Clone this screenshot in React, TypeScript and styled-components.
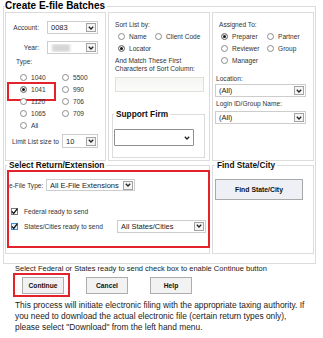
import React from "react";
import styled, { createGlobalStyle } from "styled-components";

const Global = createGlobalStyle`
  html, body { margin: 0; padding: 0; background: #fff; }
  body { font-family: "Liberation Sans", Arial, sans-serif; color: #222; }
  * { box-sizing: border-box; }
`;

const Page = styled.div`
  width: 323px;
  height: 338px;
  overflow: hidden;
  padding-left: 3px;
`;

const Frame = styled.fieldset`
  width: 313px;
  margin: 0;
  padding: 0 1px 9px 1px;
  border: 1px solid #dcdcdc;
  min-width: 0;
`;

const Title = styled.legend`
  padding: 0 2px 0 0;
  margin: 0;
  font-size: 10px;
  font-weight: bold;
  line-height: 12px;
  color: #000;
`;

const TopRow = styled.div`
  display: grid;
  grid-template-columns: 101px 102px 102px;
  column-gap: 2px;
  height: 149px;
`;

const Panel = styled.div<{ $pt?: number }>`
  border: 1px solid #dcdcdc;
  padding-top: ${(p) => p.$pt ?? 8}px;
  display: flex;
  flex-direction: column;
  align-items: flex-start;
`;

const Text = styled.div<{ $ml?: number; $mt?: number }>`
  font-size: 6.6px;
  line-height: 8px;
  height: 8px;
  white-space: nowrap;
  margin-left: ${(p) => p.$ml ?? 0}px;
  margin-top: ${(p) => p.$mt ?? 0}px;
  color: #333;
`;

const FieldGrid = styled.div`
  display: grid;
  grid-template-columns: 33px 51px;
  column-gap: 8px;
  row-gap: 7px;
  align-items: center;
`;

const FieldLabel = styled.span`
  font-size: 6.6px;
  text-align: right;
  color: #333;
`;

const SelectBox = styled.div<{ $w: number; $h?: number; $ml?: number; $mt?: number }>`
  width: ${(p) => p.$w}px;
  height: ${(p) => p.$h ?? 13}px;
  margin-left: ${(p) => p.$ml ?? 0}px;
  margin-top: ${(p) => p.$mt ?? 0}px;
  border: 1px solid #cdcdcd;
  background: #fff;
  display: flex;
  align-items: center;
  padding-left: 3px;
  font-size: 7.5px;
  color: #222;
  overflow: hidden;
  white-space: nowrap;
  flex-shrink: 0;
`;

const SelectValue = styled.span`
  flex: 1;
  overflow: hidden;
`;

const DropButton = styled.span`
  width: 10px;
  height: 9px;
  margin-right: 1px;
  border: 1px solid #a3a3a3;
  background: #f4f4f4;
  display: flex;
  align-items: center;
  justify-content: center;
  flex-shrink: 0;
`;

const Blurred = styled.span`
  display: block;
  width: 18px;
  height: 8px;
  margin-left: 1px;
  background: #d6d6d6;
  filter: blur(1.4px);
`;

const Chevron = () => (
  <svg width="6" height="4" viewBox="0 0 6 4">
    <path d="M0.8 0.8 L3 3 L5.2 0.8" fill="none" stroke="#222" strokeWidth="1.3" />
  </svg>
);

const Select = ({
  w,
  h,
  ml,
  mt,
  value,
  children,
}: {
  w: number;
  h?: number;
  ml?: number;
  mt?: number;
  value?: string;
  children?: React.ReactNode;
}) => (
  <SelectBox $w={w} $h={h} $ml={ml} $mt={mt}>
    <SelectValue>{children ?? value}</SelectValue>
    <DropButton>
      <Chevron />
    </DropButton>
  </SelectBox>
);

const RadioGrid = styled.div<{ $cols: string; $ml: number; $mt?: number }>`
  display: grid;
  grid-template-columns: ${(p) => p.$cols};
  grid-auto-rows: 12px;
  margin-left: ${(p) => p.$ml}px;
  margin-top: ${(p) => p.$mt ?? 0}px;
`;

const RadioItem = styled.label<{ $mark?: boolean }>`
  display: flex;
  align-items: center;
  gap: 4px;
  font-size: 6.6px;
  color: #333;
  white-space: nowrap;
  position: relative;
  ${(p) =>
    p.$mark
      ? `&::after {
    content: "";
    position: absolute;
    left: -13px;
    top: -1px;
    width: 45px;
    height: 15px;
    border: 2px solid #e3222b;
  }`
      : ""}
`;

const RadioInput = styled.input.attrs({ type: "radio" })`
  appearance: none;
  width: 7px;
  height: 7px;
  margin: 0;
  border: 1px solid #8c8c8c;
  border-radius: 50%;
  background: #fff;
  flex-shrink: 0;
  &:checked {
    background: #111;
    box-shadow: inset 0 0 0 1px #fff;
  }
`;

const Radio = ({ label, checked, name, mark }: { label: string; checked?: boolean; name: string; mark?: boolean }) => (
  <RadioItem $mark={mark}>
    <RadioInput name={name} defaultChecked={checked} />
    {label}
  </RadioItem>
);

const LimitRow = styled.div`
  display: flex;
  align-items: center;
  margin-top: 3px;
  margin-left: 6px;
`;

const LimitLabel = styled.span`
  width: 50px;
  font-size: 6.6px;
  color: #333;
  white-space: nowrap;
`;

const TextInput = styled.div`
  width: 89px;
  height: 15px;
  margin-left: 6px;
  margin-top: 4px;
  border: 1px solid #e2e0da;
  background: linear-gradient(#f6f6f4, #fbfbfa);
`;

const SubSet = styled.fieldset<{ $ml: number; $mt: number; $w: number }>`
  margin: ${(p) => p.$mt}px 0 0 ${(p) => p.$ml}px;
  width: ${(p) => p.$w}px;
  padding: 0 0 0 1px;
  border: 1px solid #dcdcdc;
  min-width: 0;
`;

const SubLegend = styled.legend`
  padding: 0 2px;
  margin: 0;
  font-size: 8.3px;
  font-weight: bold;
  line-height: 9px;
  color: #111;
`;

const PlainSelect = styled.div`
  width: 80px;
  height: 17px;
  margin: 10px 0 11px 0;
  border: 1px solid #8e8e8e;
  border-radius: 1px;
  background: #fff;
  display: flex;
  align-items: center;
  justify-content: flex-end;
  padding-right: 3px;
`;

const BottomRow = styled.div`
  display: grid;
  grid-template-columns: 205px 102px;
  column-gap: 2px;
  height: 93px;
`;

const GroupSet = styled.fieldset<{ $pl: number }>`
  margin: 0;
  padding: 0 0 5px ${(p) => p.$pl}px;
  border: 1px solid #dcdcdc;
  min-width: 0;
`;

const HighlightBox = styled.div`
  margin-right: -1px;
  height: 78px;
  border: 2px solid #e3222b;
  padding: 7px 2px 0 0;
`;

const TypeRow = styled.div`
  display: flex;
  align-items: center;
  height: 12px;
`;

const TypeLabel = styled.span`
  width: 37px;
  font-size: 6.6px;
  color: #333;
  white-space: nowrap;
`;

const CheckRow = styled.div<{ $mt: number; $h: number }>`
  display: flex;
  align-items: center;
  justify-content: space-between;
  height: ${(p) => p.$h}px;
  margin-top: ${(p) => p.$mt}px;
`;

const CheckLabel = styled.label`
  display: flex;
  align-items: center;
  gap: 6px;
  margin-left: 2px;
  font-size: 6.6px;
  color: #333;
  white-space: nowrap;
`;

const CheckBox = styled.span<{ $focus?: boolean }>`
  width: 7px;
  height: 7px;
  border: 1px solid ${(p) => (p.$focus ? "#3f8fd8" : "#7b7b7b")};
  background: ${(p) => (p.$focus ? "#e3effa" : "#fff")};
  display: flex;
  align-items: center;
  justify-content: center;
  overflow: visible;
`;

const Check = ({ label, focus }: { label: string; focus?: boolean }) => (
  <CheckLabel>
    <CheckBox $focus={focus} role="checkbox" aria-checked="true">
      <svg width="7" height="7" viewBox="0 0 7 7" style={{ overflow: "visible" }}>
        <path d="M0.8 3.4 L2.7 5.4 L6.4 0.6" fill="none" stroke="#111" strokeWidth="1.3" />
      </svg>
    </CheckBox>
    {label}
  </CheckLabel>
);

const FindButton = styled.button`
  width: 88px;
  height: 21px;
  margin-top: 9px;
  border: 1px solid #a9a9a9;
  background: #eef0f6;
  font-family: inherit;
  font-size: 6.85px;
  font-weight: bold;
  color: #111;
  padding: 0;
`;

const Instruction = styled.div`
  margin-left: 12px;
  font-size: 7.5px;
  line-height: 9px;
  color: #222;
  white-space: nowrap;
`;

const ButtonRow = styled.div`
  display: flex;
  align-items: center;
  margin-left: 10px;
`;

const Mark = styled.div`
  border: 2px solid #e3222b;
  padding: 2px 4px 1px 7px;
`;

const ActionButton = styled.button<{ $ml?: number }>`
  width: 42px;
  height: 17px;
  margin-left: ${(p) => p.$ml ?? 0}px;
  border: 1px solid #adadad;
  background: #f2f2f2;
  font-family: inherit;
  font-size: 6.7px;
  font-weight: bold;
  color: #111;
  padding: 0;
  display: block;
`;

const Paragraph = styled.p`
  margin: 3px 0 0 12px;
  font-size: 8.4px;
  line-height: 11px;
  color: #222;
  white-space: nowrap;
`;

export default function App() {
  return (
    <Page>
      <Global />
      <Frame>
        <Title>Create E-file Batches</Title>
        <TopRow>
          <Panel>
            <FieldGrid>
              <FieldLabel>Account:</FieldLabel>
              <Select w={51} value="0083" />
              <FieldLabel>Year:</FieldLabel>
              <Select w={51}>
                <Blurred />
              </Select>
            </FieldGrid>
            <Text $ml={10} $mt={4}>Type:</Text>
            <RadioGrid $cols="42px 42px" $ml={14} $mt={5}>
              <Radio name="type" label="1040" />
              <Radio name="type" label="5500" />
              <Radio name="type" label="1041" checked mark />
              <Radio name="type" label="990" />
              <Radio name="type" label="1120" />
              <Radio name="type" label="706" />
              <Radio name="type" label="1065" />
              <Radio name="type" label="709" />
              <Radio name="type" label="All" />
            </RadioGrid>
            <LimitRow>
              <LimitLabel>Limit List size to</LimitLabel>
              <Select w={36} h={14} value="10" />
            </LimitRow>
          </Panel>
          <Panel>
            <Text $ml={6}>Sort List by:</Text>
            <RadioGrid $cols="37px auto" $ml={9} $mt={1}>
              <Radio name="sort" label="Name" />
              <Radio name="sort" label="Client Code" />
              <Radio name="sort" label="Locator" checked />
            </RadioGrid>
            <Text $ml={6} $mt={3}>And Match These First</Text>
            <Text $ml={6}>Characters of Sort Column:</Text>
            <TextInput />
            <SubSet $ml={3} $mt={18} $w={93}>
              <SubLegend>Support Firm</SubLegend>
              <PlainSelect>
                <Chevron />
              </PlainSelect>
            </SubSet>
          </Panel>
          <Panel>
            <Text $ml={6}>Assigned To:</Text>
            <RadioGrid $cols="46px auto" $ml={8} $mt={1}>
              <Radio name="assigned" label="Preparer" checked />
              <Radio name="assigned" label="Partner" />
              <Radio name="assigned" label="Reviewer" />
              <Radio name="assigned" label="Group" />
              <Radio name="assigned" label="Manager" />
            </RadioGrid>
            <Text $ml={3} $mt={9}>Location:</Text>
            <Select w={91} ml={2} mt={1} value="(All)" />
            <Text $ml={3} $mt={3}>Login ID/Group Name:</Text>
            <Select w={91} ml={2} mt={3} value="(All)" />
          </Panel>
        </TopRow>
        <BottomRow>
          <GroupSet $pl={1}>
            <SubLegend>Select Return/Extension</SubLegend>
            <HighlightBox>
              <TypeRow>
                <TypeLabel>e-File Type:</TypeLabel>
                <Select w={89} h={12} value="All E-File Extensions" />
              </TypeRow>
              <CheckRow $mt={14} $h={12}>
                <Check label="Federal ready to send" />
              </CheckRow>
              <CheckRow $mt={2} $h={14}>
                <Check label="States/Cities ready to send" focus />
                <Select w={89} value="All States/Cities" />
              </CheckRow>
            </HighlightBox>
          </GroupSet>
          <GroupSet $pl={2}>
            <SubLegend>Find State/City</SubLegend>
            <FindButton>Find State/City</FindButton>
          </GroupSet>
        </BottomRow>
      </Frame>
      <Instruction>Select Federal or States ready to send check box to enable Continue button</Instruction>
      <ButtonRow>
        <Mark>
          <ActionButton>Continue</ActionButton>
        </Mark>
        <ActionButton $ml={16}>Cancel</ActionButton>
        <ActionButton $ml={22}>Help</ActionButton>
      </ButtonRow>
      <Paragraph>
        This process will initiate electronic filing with the appropriate taxing authority. If
        <br />
        you need to download the actual electronic file (certain return types only),
        <br />
        please select "Download" from the left hand menu.
      </Paragraph>
    </Page>
  );
}
